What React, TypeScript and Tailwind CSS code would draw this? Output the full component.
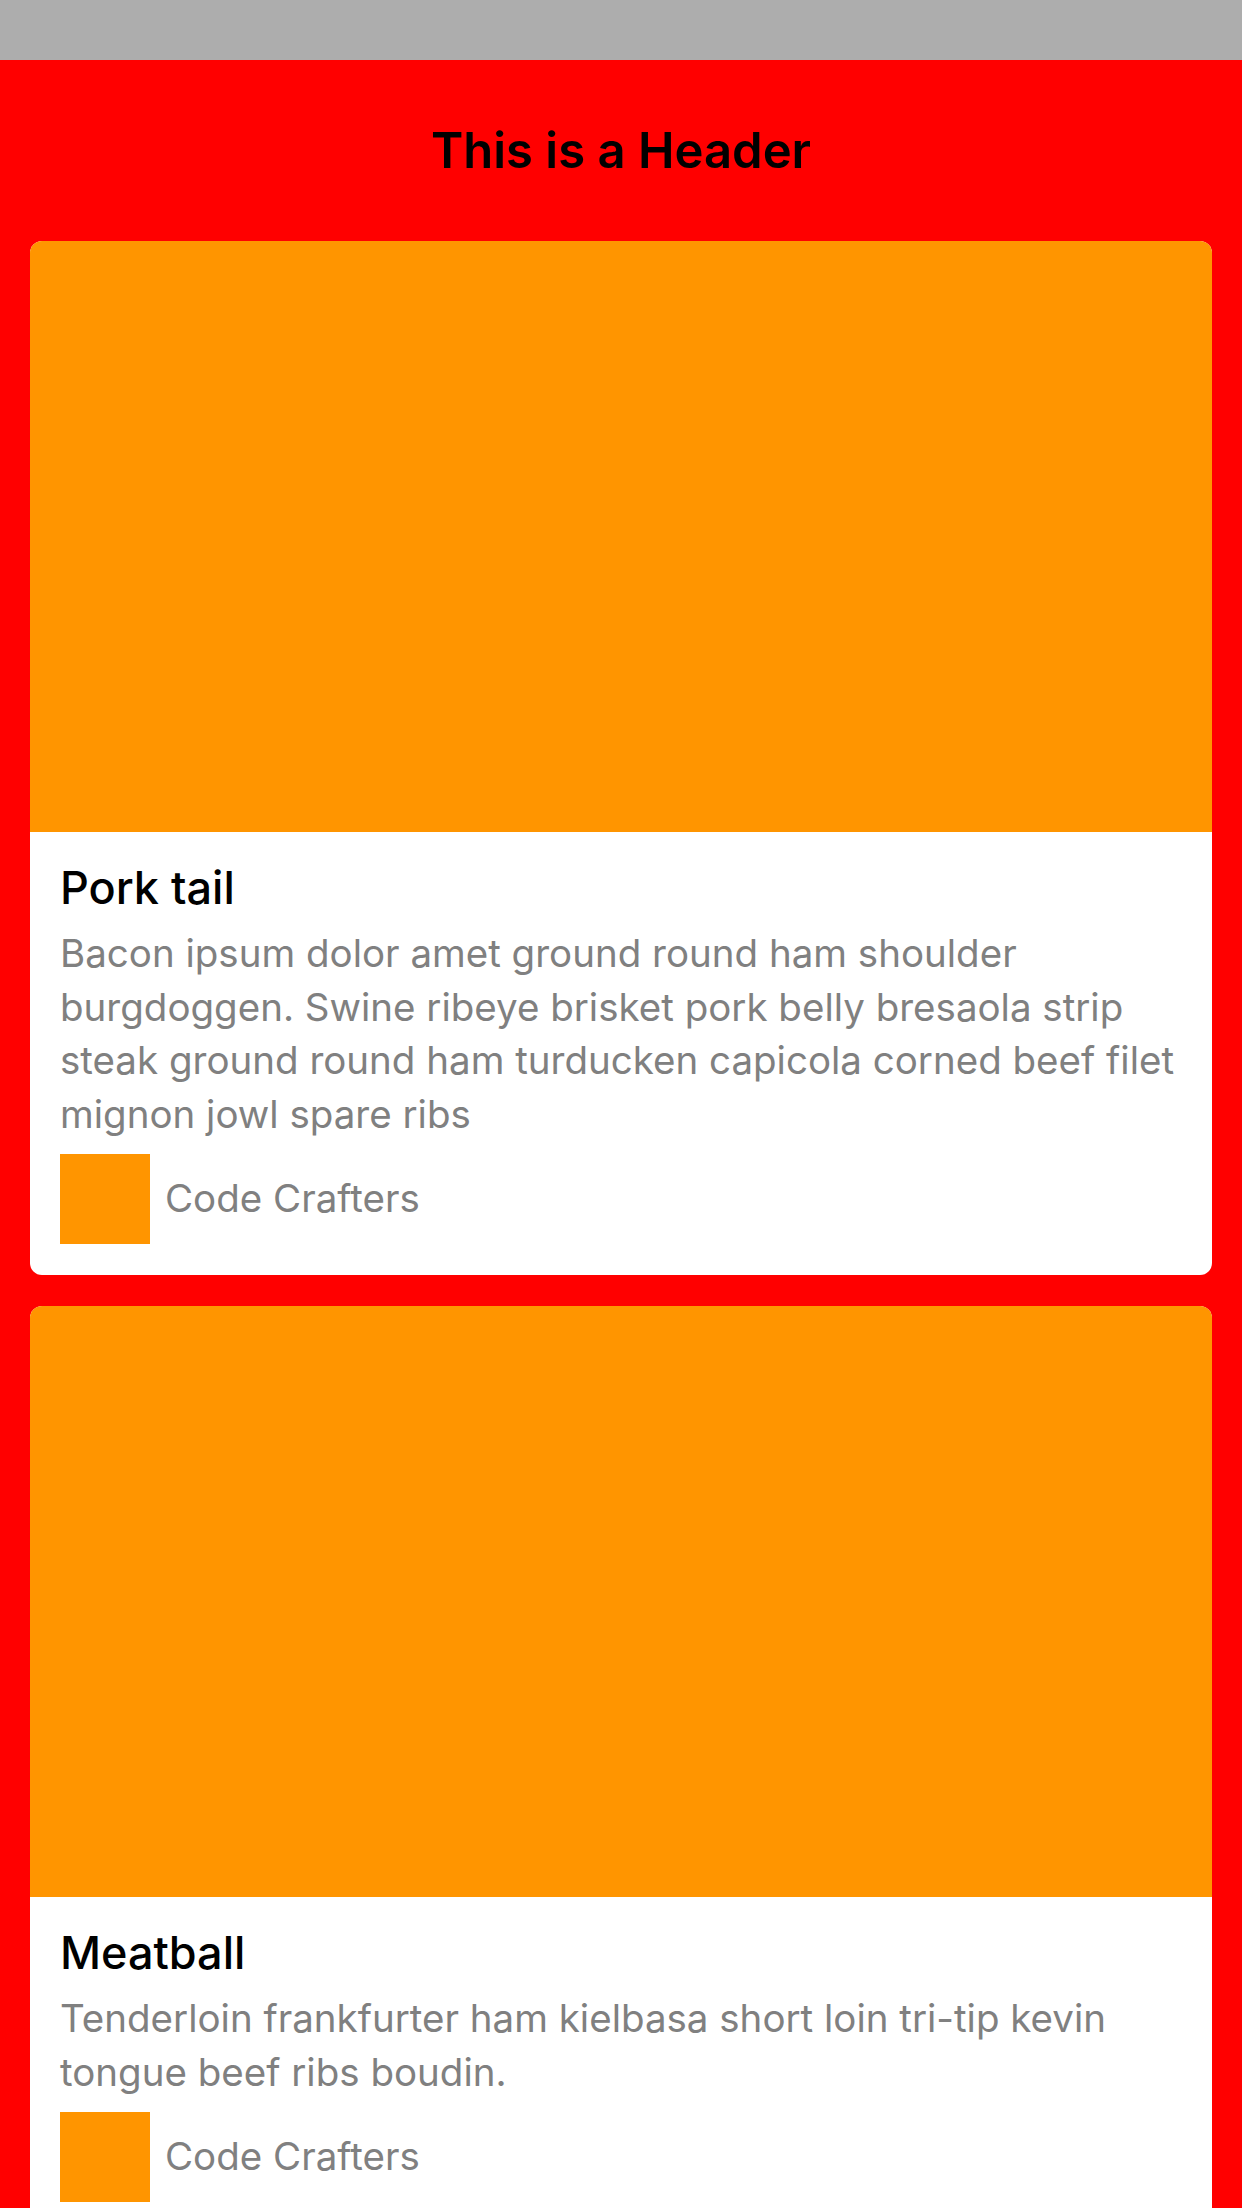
import React from 'react';

type Post = {
  title: string;
  body: string;
  author: string;
};

const POSTS: Post[] = [
  {
    title: 'Pork tail',
    body: 'Bacon ipsum dolor amet ground round ham shoulder burgdoggen. Swine ribeye brisket pork belly bresaola strip steak ground round ham turducken capicola corned beef filet mignon jowl spare ribs',
    author: 'Code Crafters',
  },
  {
    title: 'Meatball',
    body: 'Tenderloin frankfurter ham kielbasa short loin tri-tip kevin tongue beef ribs boudin.',
    author: 'Code Crafters',
  },
];

const PostCard: React.FC<{ post: Post }> = ({ post }) => (
  <div className="bg-white rounded-[12px] overflow-hidden shrink-0">
    <div className="h-[591px] bg-[#ff9500]" />
    <div className="px-[30px] pt-[29px] pb-[31px]">
      <div className="text-[45px] leading-[54px] font-medium text-black">{post.title}</div>
      <p className="mt-[12px] text-[38.5px] leading-[53.5px] text-[#808080]">{post.body}</p>
      <div className="mt-[13px] flex items-center gap-[15px]">
        <div className="w-[90px] h-[90px] bg-[#ff9500]" />
        <span className="text-[38.5px] text-[#808080]">{post.author}</span>
      </div>
    </div>
  </div>
);

const App: React.FC = () => {
  return (
    <div className="w-[1242px] h-[2208px] overflow-hidden bg-[#ff0000] flex flex-col" style={{ fontFamily: 'Inter, "Noto Sans", sans-serif' }}>
      <div className="h-[60px] bg-[#adadad] shrink-0" />
      <div className="h-[181px] shrink-0 flex items-center justify-center">
        <h1 className="text-[49px] font-semibold text-black">This is a Header</h1>
      </div>
      <div className="px-[30px] flex flex-col gap-[31px]">
        {POSTS.map((post) => (
          <PostCard key={post.title} post={post} />
        ))}
      </div>
    </div>
  );
};

export default App;
